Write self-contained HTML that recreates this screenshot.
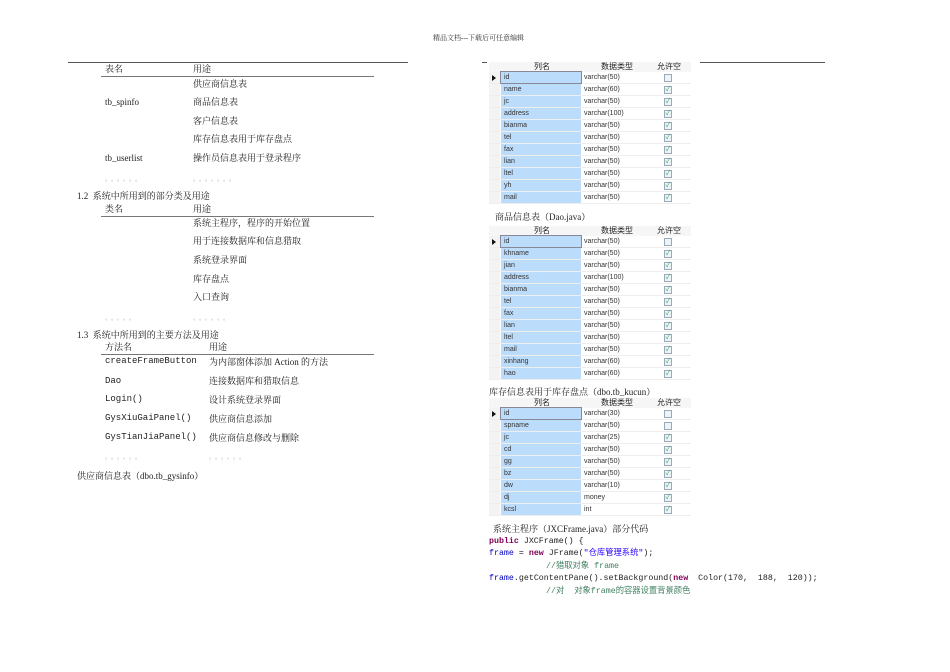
<!DOCTYPE html>
<html><head><meta charset="utf-8"><style>
*{margin:0;padding:0;box-sizing:border-box}
i{font-style:normal}
body{width:950px;height:672px;background:#fff;position:relative;overflow:hidden;font-family:"Liberation Serif","Noto Serif CJK SC",serif;color:#222;font-size:9px}
.t{position:absolute;white-space:nowrap;line-height:11px}
.m{font-family:"Liberation Mono","Noto Sans CJK SC",monospace}
.d{color:#999;font-size:6px;letter-spacing:3px}
.l{position:absolute;height:1px;background:#555}
.tb{position:absolute;left:489px;width:202px;font-family:"Liberation Sans","Noto Sans CJK SC",sans-serif;font-size:7px;color:#333}
.h{height:10px;position:relative;background:#f6f6f6}
.h span{position:absolute;top:0;line-height:10px;font-size:8px;color:#222}
.r{height:12px;position:relative;border-bottom:1px solid #eee}
.r .g{position:absolute;left:0;top:0;width:11px;height:11px;background:#f3f3f3}
.r .n{position:absolute;left:12px;top:0;width:80px;height:11px;background:#bcdcfb;padding-left:3px;line-height:11px}
.r .y{position:absolute;left:95px;top:0;line-height:11px}
.r .c{position:absolute;left:175px;top:2px;width:8px;height:8px;border:1px solid #9ab;background:#eef3f8;font-size:7px;line-height:6px;text-align:center;color:#3a6}
.r .a{position:absolute;left:3px;top:3px;width:0;height:0;border-left:4px solid #111;border-top:3px solid transparent;border-bottom:3px solid transparent}
.code{font-size:8.3px}
.kw{color:#7f0055;font-weight:bold}.s{color:#2a00ff}.cm{color:#3f7f5f}.f{color:#0000c0}
</style></head><body>
<div class="t" style="left:433px;top:33px;font-size:7px;color:#333">精品文档---下载后可任意编辑</div>
<div class="l" style="left:68px;top:62px;width:340px"></div>
<div class="l" style="left:482px;top:62px;width:5px"></div>
<div class="l" style="left:700px;top:62px;width:125px"></div>

<div class="t" style="left:105px;top:64px">表名</div><div class="t" style="left:193px;top:64px">用途</div>
<div class="l" style="left:101px;top:76px;width:273px;background:#777"></div>
<div class="t" style="left:193px;top:79px">供应商信息表</div>
<div class="t" style="left:105px;top:97px">tb_spinfo</div><div class="t" style="left:193px;top:97px">商品信息表</div>
<div class="t" style="left:193px;top:116px">客户信息表</div>
<div class="t" style="left:193px;top:134px">库存信息表用于库存盘点</div>
<div class="t" style="left:105px;top:153px">tb_userlist</div><div class="t" style="left:193px;top:153px">操作员信息表用于登录程序</div>
<div class="t d" style="left:105px;top:175px">。。。。。。</div><div class="t d" style="left:193px;top:175px">。。。。。。。</div>
<div class="t" style="left:77px;top:191px">1.2&nbsp; 系统中所用到的部分类及用途</div>
<div class="t" style="left:105px;top:204px">类名</div><div class="t" style="left:193px;top:204px">用途</div>
<div class="l" style="left:101px;top:216px;width:273px;background:#777"></div>
<div class="t" style="left:193px;top:218px">系统主程序，程序的开始位置</div>
<div class="t" style="left:193px;top:236px">用于连接数据库和信息猎取</div>
<div class="t" style="left:193px;top:255px">系统登录界面</div>
<div class="t" style="left:193px;top:274px">库存盘点</div>
<div class="t" style="left:193px;top:292px">入口查询</div>
<div class="t d" style="left:105px;top:314px">。。。。。</div><div class="t d" style="left:193px;top:314px">。。。。。。</div>
<div class="t" style="left:77px;top:330px">1.3&nbsp; 系统中所用到的主要方法及用途</div>
<div class="t" style="left:105px;top:342px">方法名</div><div class="t" style="left:209px;top:342px">用途</div>
<div class="l" style="left:101px;top:354px;width:273px;background:#777"></div>
<div class="t m" style="left:105px;top:356px">createFrameButton</div><div class="t" style="left:209px;top:357px">为内部窗体添加 Action 的方法</div>
<div class="t m" style="left:105px;top:376px">Dao</div><div class="t" style="left:209px;top:376px">连接数据库和猎取信息</div>
<div class="t m" style="left:105px;top:394px">Login()</div><div class="t" style="left:209px;top:395px">设计系统登录界面</div>
<div class="t m" style="left:105px;top:413px">GysXiuGaiPanel()</div><div class="t" style="left:209px;top:414px">供应商信息添加</div>
<div class="t m" style="left:105px;top:432px">GysTianJiaPanel()</div><div class="t" style="left:209px;top:433px">供应商信息修改与删除</div>
<div class="t d" style="left:105px;top:453px">。。。。。。</div><div class="t d" style="left:209px;top:453px">。。。。。。</div>
<div class="t" style="left:77px;top:471px">供应商信息表（dbo.tb_gysinfo）</div>

<div class="tb" style="top:62px">
<div class="h"><span style="left:45px">列名</span><span style="left:112px">数据类型</span><span style="left:168px">允许空</span></div>
<div class="r"><i class="g"><i class="a"></i></i><i class="n" style="outline:1px solid #889">id</i><i class="y">varchar(50)</i><i class="c"></i></div>
<div class="r"><i class="g"></i><i class="n">name</i><i class="y">varchar(60)</i><i class="c">✓</i></div>
<div class="r"><i class="g"></i><i class="n">jc</i><i class="y">varchar(50)</i><i class="c">✓</i></div>
<div class="r"><i class="g"></i><i class="n">address</i><i class="y">varchar(100)</i><i class="c">✓</i></div>
<div class="r"><i class="g"></i><i class="n">bianma</i><i class="y">varchar(50)</i><i class="c">✓</i></div>
<div class="r"><i class="g"></i><i class="n">tel</i><i class="y">varchar(50)</i><i class="c">✓</i></div>
<div class="r"><i class="g"></i><i class="n">fax</i><i class="y">varchar(50)</i><i class="c">✓</i></div>
<div class="r"><i class="g"></i><i class="n">lian</i><i class="y">varchar(50)</i><i class="c">✓</i></div>
<div class="r"><i class="g"></i><i class="n">ltel</i><i class="y">varchar(50)</i><i class="c">✓</i></div>
<div class="r"><i class="g"></i><i class="n">yh</i><i class="y">varchar(50)</i><i class="c">✓</i></div>
<div class="r"><i class="g"></i><i class="n">mail</i><i class="y">varchar(50)</i><i class="c">✓</i></div>
</div>
<div class="t" style="left:495px;top:212px">商品信息表（Dao.java）</div>

<div class="tb" style="top:226px">
<div class="h"><span style="left:45px">列名</span><span style="left:112px">数据类型</span><span style="left:168px">允许空</span></div>
<div class="r"><i class="g"><i class="a"></i></i><i class="n" style="outline:1px solid #889">id</i><i class="y">varchar(50)</i><i class="c"></i></div>
<div class="r"><i class="g"></i><i class="n">khname</i><i class="y">varchar(50)</i><i class="c">✓</i></div>
<div class="r"><i class="g"></i><i class="n">jian</i><i class="y">varchar(50)</i><i class="c">✓</i></div>
<div class="r"><i class="g"></i><i class="n">address</i><i class="y">varchar(100)</i><i class="c">✓</i></div>
<div class="r"><i class="g"></i><i class="n">bianma</i><i class="y">varchar(50)</i><i class="c">✓</i></div>
<div class="r"><i class="g"></i><i class="n">tel</i><i class="y">varchar(50)</i><i class="c">✓</i></div>
<div class="r"><i class="g"></i><i class="n">fax</i><i class="y">varchar(50)</i><i class="c">✓</i></div>
<div class="r"><i class="g"></i><i class="n">lian</i><i class="y">varchar(50)</i><i class="c">✓</i></div>
<div class="r"><i class="g"></i><i class="n">ltel</i><i class="y">varchar(50)</i><i class="c">✓</i></div>
<div class="r"><i class="g"></i><i class="n">mail</i><i class="y">varchar(50)</i><i class="c">✓</i></div>
<div class="r"><i class="g"></i><i class="n">xinhang</i><i class="y">varchar(60)</i><i class="c">✓</i></div>
<div class="r"><i class="g"></i><i class="n">hao</i><i class="y">varchar(60)</i><i class="c">✓</i></div>
</div>
<div class="t" style="left:489px;top:387px">库存信息表用于库存盘点（dbo.tb_kucun）</div>

<div class="tb" style="top:398px">
<div class="h"><span style="left:45px">列名</span><span style="left:112px">数据类型</span><span style="left:168px">允许空</span></div>
<div class="r"><i class="g"><i class="a"></i></i><i class="n" style="outline:1px solid #889">id</i><i class="y">varchar(30)</i><i class="c"></i></div>
<div class="r"><i class="g"></i><i class="n">spname</i><i class="y">varchar(50)</i><i class="c"></i></div>
<div class="r"><i class="g"></i><i class="n">jc</i><i class="y">varchar(25)</i><i class="c">✓</i></div>
<div class="r"><i class="g"></i><i class="n">cd</i><i class="y">varchar(50)</i><i class="c">✓</i></div>
<div class="r"><i class="g"></i><i class="n">gg</i><i class="y">varchar(50)</i><i class="c">✓</i></div>
<div class="r"><i class="g"></i><i class="n">bz</i><i class="y">varchar(50)</i><i class="c">✓</i></div>
<div class="r"><i class="g"></i><i class="n">dw</i><i class="y">varchar(10)</i><i class="c">✓</i></div>
<div class="r"><i class="g"></i><i class="n">dj</i><i class="y">money</i><i class="c">✓</i></div>
<div class="r"><i class="g"></i><i class="n">kcsl</i><i class="y">int</i><i class="c">✓</i></div>
</div>

<div class="t" style="left:493px;top:524px">系统主程序（JXCFrame.java）部分代码</div>
<div class="t m code" style="left:489px;top:536px"><span class="kw">public</span> JXCFrame() {</div>
<div class="t m code" style="left:489px;top:548px"><span class="f">frame</span> = <span class="kw">new</span> JFrame(<span class="s">"仓库管理系统"</span>);</div>
<div class="t m code cm" style="left:546px;top:561px">//猎取对象 frame</div>
<div class="t m code" style="left:489px;top:573px"><span class="f">frame</span>.getContentPane().setBackground(<span class="kw">new</span>&nbsp; Color(170,&nbsp; 188,&nbsp; 120));</div>
<div class="t m code cm" style="left:546px;top:586px">//对&nbsp; 对象frame的容器设置背景颜色</div>
</body></html>
